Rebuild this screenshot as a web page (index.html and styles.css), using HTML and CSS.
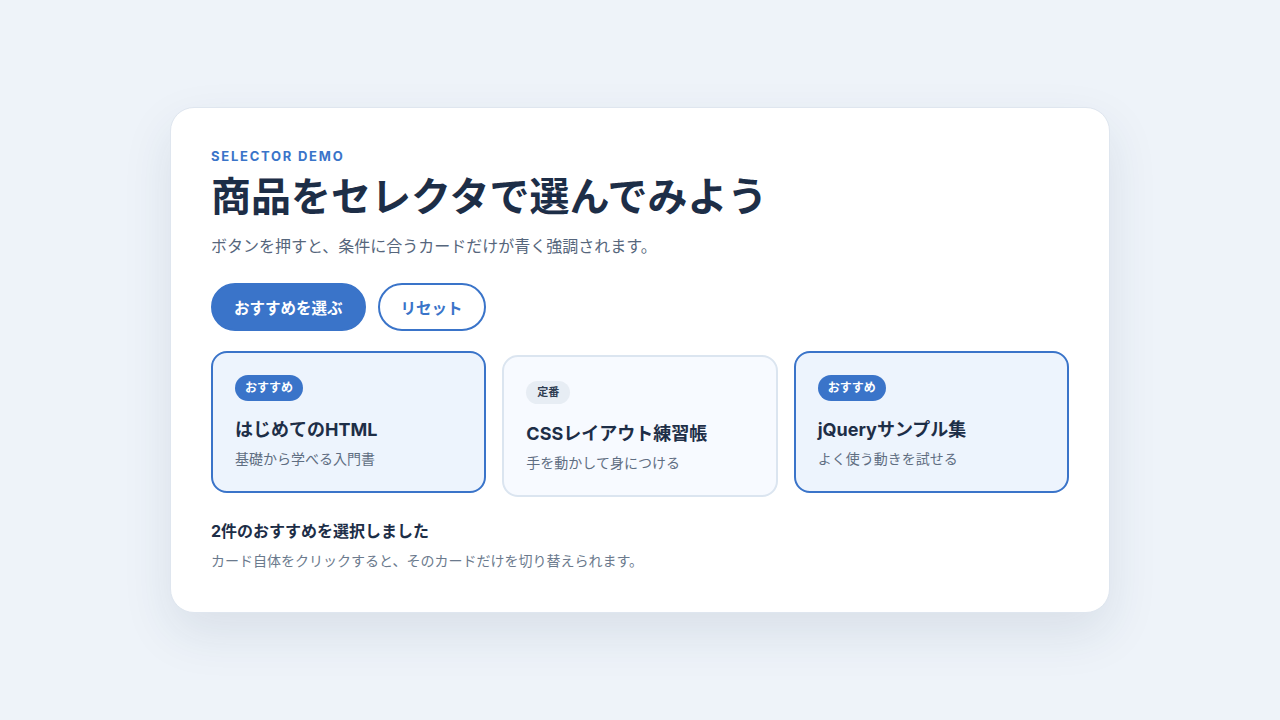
FILE: index.html
```html
<!DOCTYPE html>
<html lang="ja">
<head>
<meta charset="utf-8">
<title>Selector Demo</title>
<link rel="stylesheet" href="styles.css">
</head>
<body>
<main class="panel">
  <p class="eyebrow">SELECTOR DEMO</p>
  <h1 class="title">商品をセレクタで選んでみよう</h1>
  <p class="lead">ボタンを押すと、条件に合うカードだけが青く強調されます。</p>
  <div class="actions">
    <button class="btn btn-primary">おすすめを選ぶ</button>
    <button class="btn btn-outline">リセット</button>
  </div>
  <div class="cards">
    <div class="card is-selected">
      <span class="badge badge-blue">おすすめ</span>
      <h2 class="card-title">はじめてのHTML</h2>
      <p class="card-desc">基礎から学べる入門書</p>
    </div>
    <div class="card">
      <span class="badge badge-gray">定番</span>
      <h2 class="card-title">CSSレイアウト練習帳</h2>
      <p class="card-desc">手を動かして身につける</p>
    </div>
    <div class="card is-selected">
      <span class="badge badge-blue">おすすめ</span>
      <h2 class="card-title">jQueryサンプル集</h2>
      <p class="card-desc">よく使う動きを試せる</p>
    </div>
  </div>
  <p class="status">2件のおすすめを選択しました</p>
  <p class="note">カード自体をクリックすると、そのカードだけを切り替えられます。</p>
</main>
</body>
</html>
```

FILE: styles.css
```css
* { box-sizing: border-box; }
html, body { margin: 0; padding: 0; }
body {
  background: #eef3f9;
  font-family: "Inter", "Noto Sans CJK JP", sans-serif;
  color: #1d2e47;
  min-height: 720px;
  display: flex;
  justify-content: center;
  align-items: flex-start;
  padding-top: 107px;
}
.panel {
  width: 940px;
  background: #ffffff;
  border: 1px solid #dfe6ef;
  border-radius: 24px;
  padding: 40px 40px 41px;
  box-shadow: 0 20px 50px rgba(30, 55, 90, 0.10);
}
.eyebrow {
  margin: 0;
  font-size: 13px;
  font-weight: 700;
  letter-spacing: 0.135em;
  color: #3a74c9;
  line-height: 16px;
}
.title {
  margin: 6px 0 0;
  font-size: 40px;
  font-weight: 700;
  line-height: 53px;
  color: #1d2e47;
}
.lead {
  margin: 11px 0 0;
  font-size: 16px;
  line-height: 24px;
  color: #56667c;
}
.actions {
  display: flex;
  gap: 12px;
  margin-top: 25px;
}
.btn {
  height: 48px;
  padding: 0 21px;
  border-radius: 24px;
  font-family: inherit;
  font-size: 15.5px;
  font-weight: 700;
  border: 2px solid #3a74c9;
  cursor: pointer;
}
.btn-primary { background: #3a74c9; color: #ffffff; }
.btn-outline { background: #ffffff; color: #3a74c9; }
.cards {
  display: grid;
  grid-template-columns: repeat(3, 1fr);
  gap: 16px;
  margin-top: 20px;
  align-items: start;
}
.card {
  height: 142px;
  border: 2px solid #dbe5f0;
  border-radius: 16px;
  background: #f7faff;
  padding: 23px 22px;
  margin-top: 4px;
}
.card.is-selected {
  border-color: #3a74c9;
  background: #edf4fd;
  margin-top: 0;
  padding-top: 22px;
}
.badge {
  display: inline-block;
  height: 26px;
  line-height: 26px;
  padding: 0 10px;
  border-radius: 13px;
  font-size: 12px;
  font-weight: 700;
}
.badge-blue { background: #3a74c9; color: #ffffff; }
.badge-gray {
  background: #e7edf4;
  color: #2f3d52;
  font-size: 11px;
  height: 23px;
  line-height: 23px;
  padding: 0 11px;
  border-radius: 12px;
}
.card-title {
  margin: 17px 0 0;
  font-size: 18px;
  font-weight: 700;
  line-height: 24px;
  color: #1d2e47;
}
.card .badge-gray + .card-title { margin-top: 18px; }
.card-desc {
  margin: 7px 0 0;
  font-size: 14px;
  line-height: 20px;
  color: #5f6e82;
}
.status {
  margin: 23px 0 0;
  font-size: 16px;
  font-weight: 700;
  line-height: 22px;
  color: #1d2e47;
}
.note {
  margin: 9px 0 0;
  font-size: 14px;
  line-height: 20px;
  color: #6b7a8d;
}
```
